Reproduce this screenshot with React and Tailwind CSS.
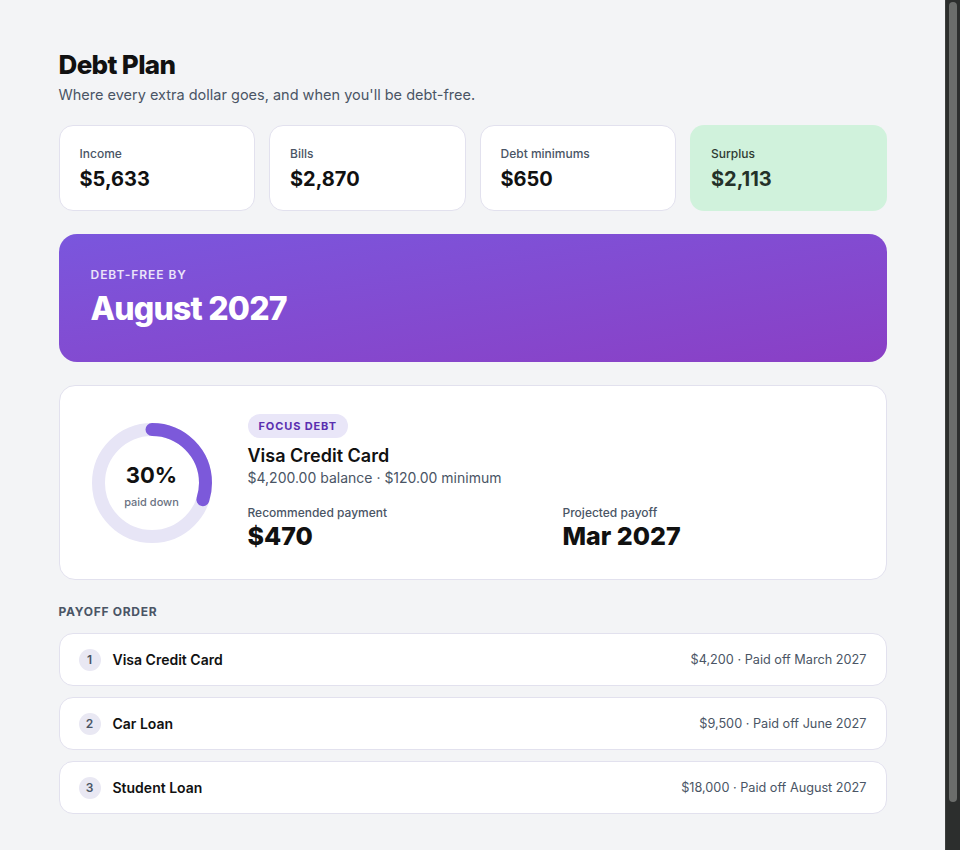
import React from 'react';

const STATS = [
  { label: 'Income', value: '$5,633' },
  { label: 'Bills', value: '$2,870' },
  { label: 'Debt minimums', value: '$650' },
  { label: 'Surplus', value: '$2,113', good: true },
];

const ORDER = [
  { n: 1, name: 'Visa Credit Card', detail: '$4,200 · Paid off March 2027' },
  { n: 2, name: 'Car Loan', detail: '$9,500 · Paid off June 2027' },
  { n: 3, name: 'Student Loan', detail: '$18,000 · Paid off August 2027' },
];

const Donut = ({ pct }) => {
  const r = 53.5;
  const c = 2 * Math.PI * r;
  return (
    <div className="relative w-[120px] h-[120px] flex-shrink-0">
      <svg width="120" height="120" viewBox="0 0 120 120" className="-rotate-90">
        <circle cx="60" cy="60" r={r} fill="none" stroke="#e7e5f6" strokeWidth="13" />
        <circle
          cx="60"
          cy="60"
          r={r}
          fill="none"
          stroke="#7c59da"
          strokeWidth="13"
          strokeLinecap="round"
          strokeDasharray={`${(c * pct) / 100} ${c}`}
        />
      </svg>
      <div className="absolute inset-0 flex flex-col items-center justify-center pt-[9px]">
        <span className="text-[22px] font-bold leading-none text-[#111]">{pct}%</span>
        <span className="text-[11px] font-medium text-gray-500 mt-[8px]">paid down</span>
      </div>
    </div>
  );
};

export default function App() {
  return (
    <div className="h-screen flex text-gray-900" style={{ fontFamily: 'Inter, "Noto Sans", sans-serif' }}>
      <main className="flex-1 overflow-y-auto bg-[#f3f4f6] [scrollbar-width:none]">
        <div className="max-w-[828px] mx-auto pt-[50px] pb-[88px]">
          {/* Header */}
          <h1 className="text-[26px] font-extrabold leading-[30px] text-[#111] tracking-tight">Debt Plan</h1>
          <p className="text-[14.5px] leading-5 text-gray-600 mt-[5px]">Where every extra dollar goes, and when you'll be debt-free.</p>

          {/* Stats */}
          <div className="grid grid-cols-4 gap-[14px] mt-[20px]">
            {STATS.map((s) => (
              <div
                key={s.label}
                className={
                  s.good
                    ? 'h-[86px] rounded-[14px] bg-[#d0f2dc] px-[21px] pt-[20px]'
                    : 'h-[86px] rounded-[14px] bg-white border border-[#e2e1ee] px-5 pt-[19px]'
                }
              >
                <p className={s.good ? 'text-[12px] font-medium text-[#2f3a33]' : 'text-[12px] font-medium text-gray-600'}>
                  {s.label}
                </p>
                <p className={s.good ? 'text-[20px] font-bold text-[#243129] mt-[1px]' : 'text-[20px] font-bold text-[#111] mt-[1px]'}>
                  {s.value}
                </p>
              </div>
            ))}
          </div>

          {/* Hero */}
          <div className="mt-[23px] h-[128px] rounded-[18px] bg-linear-to-br from-[#7a56dd] to-[#8a3fc5] px-8 flex flex-col justify-center">
            <p className="text-[12px] font-semibold tracking-[0.08em] text-white/85 -mt-[2px]">DEBT-FREE BY</p>
            <p className="text-[32px] font-extrabold text-white leading-tight mt-[5px] tracking-tight">August 2027</p>
          </div>

          {/* Focus debt */}
          <div className="mt-[23px] h-[195px] rounded-[16px] bg-white border border-[#e2e1ee] px-8 flex items-center gap-9">
            <Donut pct={30} />
            <div className="flex-1 -mt-[3px]">
              <span className="inline-block rounded-full bg-[#e9e6f8] px-[11px] py-[4px] text-[11px] font-bold tracking-[0.08em] text-[#5a2fb0]">
                FOCUS DEBT
              </span>
              <p className="text-[18px] font-semibold text-[#111] mt-[6px] leading-6">Visa Credit Card</p>
              <p className="text-sm text-gray-600">$4,200.00 balance · $120.00 minimum</p>
              <div className="grid grid-cols-2 gap-6 mt-[16px]">
                <div>
                  <p className="text-[12px] font-medium text-gray-600">Recommended payment</p>
                  <p className="text-[25px] font-extrabold text-[#111] leading-7">$470</p>
                </div>
                <div>
                  <p className="text-[12px] font-medium text-gray-600">Projected payoff</p>
                  <p className="text-[25px] font-extrabold text-[#111] leading-7">Mar 2027</p>
                </div>
              </div>
            </div>
          </div>

          {/* Payoff order */}
          <p className="mt-[23px] text-[12px] font-bold tracking-[0.06em] text-gray-600">PAYOFF ORDER</p>
          <div className="mt-[12px] flex flex-col gap-[11px]">
            {ORDER.map((d) => (
              <div
                key={d.n}
                className="h-[53px] rounded-[14px] bg-white border border-[#e2e1ee] pl-[19px] pr-[19px] flex items-center justify-between"
              >
                <div className="flex items-center gap-3">
                  <span className="w-[22px] h-[22px] rounded-full bg-[#e9e8f3] flex items-center justify-center text-[12px] font-semibold text-gray-600">
                    {d.n}
                  </span>
                  <span className="text-sm font-semibold text-[#111] pt-[1px]">{d.name}</span>
                </div>
                <span className="text-[12.7px] text-gray-600 pt-[1px]">{d.detail}</span>
              </div>
            ))}
          </div>
        </div>
      </main>

      {/* scrollbar track */}
      <div className="w-[15px] flex-shrink-0 bg-[#2c2e2d] border-l border-[#3d3f3e] px-[3px] pt-[2px]">
        <div className="h-[800px] rounded-full bg-[#6b6d6b]" />
      </div>
    </div>
  );
}
